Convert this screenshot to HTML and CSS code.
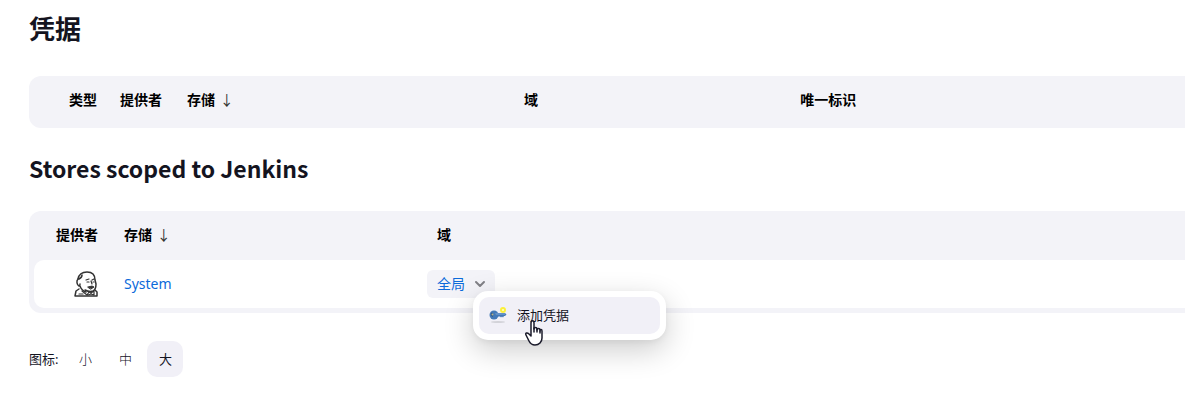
FILE: index.html
```html
<!DOCTYPE html>
<html lang="zh-CN">
<head>
  <meta charset="utf-8">
  <title>凭据 [Jenkins]</title>
  <link rel="stylesheet" href="styles.css">
</head>
<body>
  <main class="main-panel">
    <h1>凭据</h1>

    <div class="table-wrap">
      <table class="credentials">
        <colgroup>
          <col class="col-type">
          <col class="col-provider">
          <col class="col-store">
          <col class="col-domain">
          <col>
        </colgroup>
        <thead>
          <tr>
            <th>类型</th>
            <th>提供者</th>
            <th>存储 <span class="arrow">↓</span></th>
            <th>域</th>
            <th>唯一标识</th>
          </tr>
        </thead>
      </table>
    </div>

    <h2>Stores scoped to Jenkins</h2>

    <div class="table-wrap">
      <table class="stores">
        <colgroup>
          <col class="col-icon">
          <col class="col-name">
          <col>
        </colgroup>
        <thead>
          <tr>
            <th>提供者</th>
            <th>存储 <span class="arrow">↓</span></th>
            <th>域</th>
          </tr>
        </thead>
        <tbody>
          <tr>
            <td>
              <svg class="butler" viewBox="0 0 24 26" fill="none" stroke="#333" stroke-width="1.5" stroke-linecap="round" stroke-linejoin="round">
                <path d="M4 8C5 3 8 1 13 1c5 0 8 3 8 8l1 4c0 3-1 6-3 7-3 1-6 0-8-1"/>
                <path d="M4 8c-2 2-1 6 1 7 1 0 1-1 1-2M5 8c2-1 3-3 3-4M6 15c1 3 3 5 6 6"/>
                <path d="M12 9l3-1M18 9l2-1M17 10l1 3M13 11h2M19 11h1" stroke-width="1.2"/>
                <path d="M14 16l4-1 2 1-3 2z" fill="#333" stroke-width="1"/>
                <path d="M5 18l-3 2-1 5h22v-4l-2-2"/>
                <path d="M8 20l5 4 2-3 2 1 3-2v4l-3-1-3 1M5 23h4" stroke-width="1.2"/>
              </svg>
            </td>
            <td><a href="#system">System</a></td>
            <td>
              <div class="dropdown">
                <a class="domain" href="#global">全局
                  <svg class="chevron" viewBox="0 0 12 8" fill="none" stroke="#808086" stroke-width="2" stroke-linecap="round" stroke-linejoin="round"><path d="M2 2l4 4 4-4"/></svg>
                </a>
                <div class="menu">
                  <a class="menu-item" href="#new">
                    <svg class="key" viewBox="0 0 18 18">
                      <ellipse cx="9" cy="16" rx="7" ry="1" fill="#d3d3d9"/>
                      <path d="M8 7h8l1.500 1.500L16 10h-1l-1 1.500-1-1-1 1-1-1H8z" fill="#4479b8"/>
                      <ellipse cx="5" cy="9" rx="4.500" ry="4.500" fill="#4479b8"/>
                      <path d="M6 7.500h10v1H7z" fill="#82a9d6"/>
                      <path d="M2.500 6.500c2 0 2 3 1 4.500-2-1-2-3-1-4.500z" fill="#2f5688"/>
                      <circle cx="3.500" cy="8.500" r="1" fill="#b9b58c"/>
                      <circle cx="14" cy="4" r="3" fill="#fbf03a"/>
                      <circle cx="14" cy="4" r="1" fill="#fffdd8"/>
                    </svg>
                    添加凭据
                  </a>
                  <svg class="pointer" viewBox="0 0 18 26" fill="#fff" stroke="#1b1b2b" stroke-width="1.500" stroke-linejoin="round" stroke-linecap="round">
                    <path d="M6 16V3c0-3 3-3 3 0v6c0-2 3-2 3 0v1c0-2 3-2 3 0v1c0-2 2-2 2 0v7c0 4-3 7-7 7-3 0-5-2-6-4l-3-6c-1-2 1-3 3-1z"/>
                    <path d="M9 8v4M12 9v3M15 11v2" fill="none"/>
                  </svg>
                </div>
              </div>
            </td>
          </tr>
        </tbody>
      </table>
    </div>

    <div class="icon-size">
      <span class="label">图标:</span>
      <a href="#small">小</a>
      <a href="#medium">中</a>
      <a class="active" href="#large">大</a>
    </div>
  </main>
</body>
</html>
```

FILE: styles.css
```css
* {
  box-sizing: border-box;
}
body {
  margin: 0;
  background: #fff;
  color: #14141f;
  font-family: "Noto Sans", "Noto Sans CJK SC", sans-serif;
  font-size: 14px;
  line-height: 20px;
}
a {
  color: #0b6ada;
  text-decoration: none;
}
.main-panel {
  padding: 10px 0 24px 29px;
}
h1 {
  margin: 0 0 28px;
  font-size: 26px;
  line-height: 38px;
  font-weight: 700;
}
h2 {
  margin: 24px 0 26px;
  font-family: "Noto Sans CJK SC", sans-serif;
  font-size: 23px;
  line-height: 33px;
  font-weight: 700;
}

/* tables run off the right edge, so only the left corners are round */
.table-wrap {
  padding: 0 0 5px 5px;
  background: #f3f3f8;
  border-radius: 12px 0 0 12px;
}
table {
  width: 100%;
  table-layout: fixed;
  border-collapse: separate;
  border-spacing: 0;
}
th {
  height: 49px;
  padding: 0 0 2px 13px;
  color: #000;
  font-weight: 700;
  text-align: left;
}
.credentials th {
  height: 47px;
  padding-bottom: 0;
}
td {
  height: 48px;
  padding: 0 0 0 13px;
  background: #fff;
}
td:first-child {
  border-radius: 10px 0 0 10px;
}
th:first-child, td:first-child {
  padding-left: 0;
  padding-right: 13px;
  text-align: right;
}
.credentials th:first-child {
  padding-right: 10px;
}
.arrow {
  margin-left: 1px;
  color: #333;
  font-weight: 400;
}
.col-type {
  width: 73px;
}
.col-provider {
  width: 67px;
}
.col-store {
  width: 337px;
}
.col-domain {
  width: 24%;
}
.col-icon {
  width: 77px;
}
.col-name {
  width: 313px;
}
.butler {
  display: block;
  width: 24px;
  height: 26px;
  margin-left: auto;
}

.dropdown {
  position: relative;
  width: 68px;
  margin-left: -10px;
}
.domain {
  display: flex;
  align-items: center;
  justify-content: space-between;
  height: 28px;
  padding: 0 9px 0 10px;
  background: #f3f3f8;
  border-radius: 6px;
}
.chevron {
  width: 12px;
  height: 8px;
}
.menu {
  position: absolute;
  top: 21px;
  left: 46px;
  width: 193px;
  padding: 6px;
  background: #fff;
  border-radius: 15px;
  box-shadow: 0 10px 30px rgba(0, 0, 0, 0.2), 0 2px 6px rgba(0, 0, 0, 0.05);
}
.menu-item {
  display: flex;
  align-items: center;
  gap: 10px;
  height: 37px;
  padding: 0 10px 2px;
  background: #f1f0f7;
  border-radius: 10px;
  color: #14141f;
  font-size: 13px;
}
.key {
  width: 18px;
  height: 18px;
}
.pointer {
  position: absolute;
  top: 29px;
  left: 52px;
  width: 18px;
  height: 26px;
}

.icon-size {
  display: flex;
  align-items: center;
  gap: 4px;
  margin-top: 28px;
  font-size: 13px;
}
.icon-size .label {
  margin-right: 5px;
}
.icon-size a {
  width: 36px;
  border-radius: 10px;
  color: #14141f;
  font-weight: 300;
  line-height: 36px;
  text-align: center;
}
.icon-size .active {
  background: #f1f0f7;
  font-weight: 400;
}
```
